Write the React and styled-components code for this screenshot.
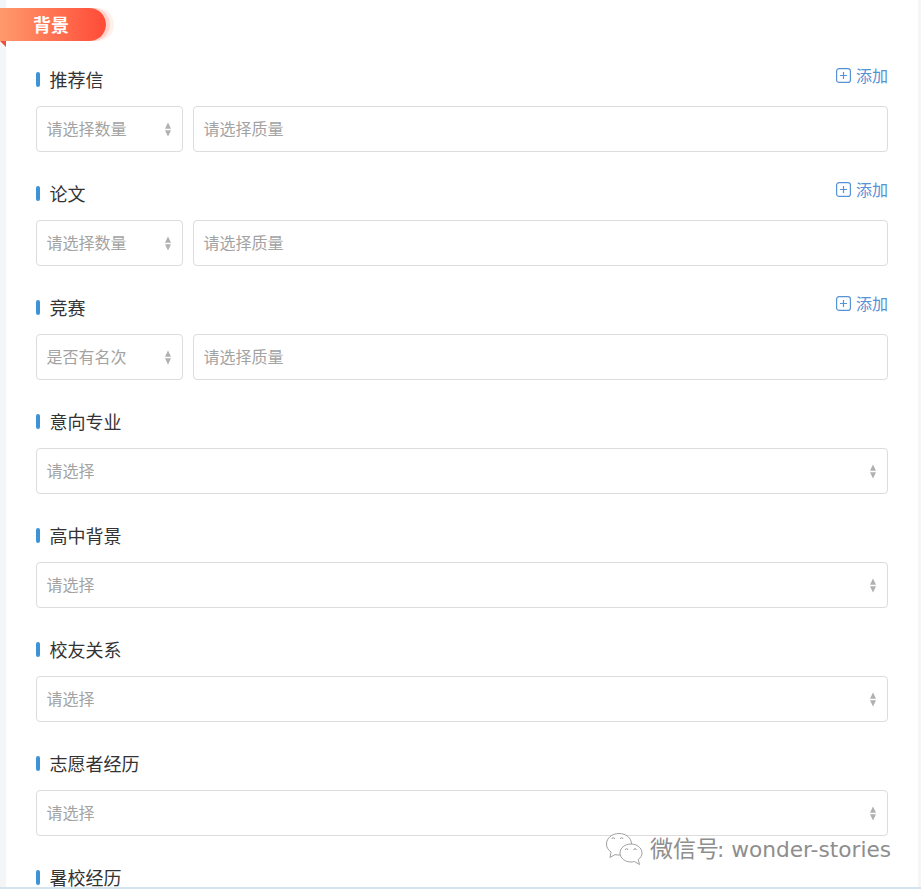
import React from "react";
import styled, { createGlobalStyle } from "styled-components";

const Global = createGlobalStyle`
  html, body { margin: 0; padding: 0; height: 100%; overflow: hidden; background: #f4f5f7; }
  #root { height: 100%; }
  * { box-sizing: border-box; }
`;

const Screen = styled.div`
  position: relative;
  height: 889px;
  display: flex;
  flex-direction: column;
  font-family: "Noto Sans CJK SC", "Liberation Sans", sans-serif;
`;

const Viewport = styled.div`
  flex: 1;
  min-height: 0;
  overflow: hidden;
  padding: 0 3px 0 6px;
`;

const Panel = styled.main`
  background: #fff;
  padding: 8px 30px 0;
`;

const Ribbon = styled.div`
  position: relative;
  width: 106px;
  height: 33px;
  margin-left: -36px;
  margin-bottom: 25px;
  padding-left: 33px;
  border-radius: 0 17px 17px 0;
  background: linear-gradient(90deg, #ff9a6c 0%, #ff4b38 100%);
  box-shadow: 4px 0 0 #ffd4cc, 8px 0 0 #fff0ec;
  color: #fff;
  font-size: 18px;
  font-weight: 700;
  line-height: 33px;
  &::after {
    content: "";
    position: absolute;
    left: 0;
    top: 33px;
    border-top: 6px solid #f04e3c;
    border-left: 6px solid transparent;
  }
`;

const Section = styled.section`
  margin-bottom: 28px;
`;

const SectionHead = styled.div`
  display: flex;
  justify-content: space-between;
  height: 28px;
  margin-bottom: 12px;
`;

const Title = styled.h3`
  position: relative;
  margin: 0;
  padding-left: 13.5px;
  color: #333;
  font-size: 18px;
  font-weight: 400;
  line-height: 26px;
  &::before {
    content: "";
    position: absolute;
    left: 0;
    top: 6px;
    width: 4px;
    height: 15px;
    border-radius: 2px;
    background: #3d93d6;
  }
`;

const AddLink = styled.a`
  display: flex;
  align-items: center;
  gap: 5px;
  height: 18px;
  color: #5592d6;
  font-size: 16px;
  line-height: 18px;
`;

const Fields = styled.div`
  display: flex;
  gap: 10px;
`;

const Field = styled.div`
  display: flex;
  align-items: center;
  justify-content: space-between;
  flex: ${(p) => (p.$narrow ? "0 0 147px" : "1")};
  height: 46px;
  padding: 0 10px 2px 9.5px;
  border: 1px solid #dcdcdc;
  border-radius: 4px;
  background: #fff;
  color: #a3a3a3;
  font-size: 16px;
`;

const SortGlyph = styled.svg`
  width: 8px;
  height: 15px;
  margin-top: 2px;
  fill: #b0b0b0;
`;

const Watermark = styled.div`
  position: absolute;
  left: 604px;
  top: 829px;
  display: flex;
  align-items: center;
  gap: 6px;
  color: #8e8e8e;
  line-height: 36px;
  white-space: nowrap;
  text-shadow: 0 0 2px #fff;
`;

const WatermarkLabel = styled.span`
  font-size: 23px;
`;

const WatermarkId = styled.span`
  margin-left: -2px;
  font-family: "DejaVu Sans", "Liberation Sans", sans-serif;
  font-size: 21.7px;
`;

const BottomEdge = styled.div`
  flex: 0 0 2px;
  background: #d4e4ee;
`;

const PlusIcon = () => (
  <svg width="15" height="15" viewBox="0 0 15 15" fill="none" stroke="#5592d6" strokeWidth="1.2">
    <rect x="0.6" y="0.6" width="13.8" height="13.8" rx="2.5" />
    <path d="M7.5 4v7M4 7.5h7" />
  </svg>
);

const SortIcon = () => (
  <SortGlyph viewBox="0 0 8 15">
    <path d="M4 0.5 7 6.8H1Z" />
    <path d="M4 14.5 7 8.2H1Z" />
  </SortGlyph>
);

const WeChatIcon = () => (
  <svg width="40" height="34" viewBox="0 0 40 34" fill="#fff" stroke="#a0a0a0" strokeWidth="1">
    <path d="M15 1.5C8.100 1.5 2.500 6.200 2.500 12c0 3.300 1.800 6.200 4.600 8.100L6 25.500l5-2.900c1.300.3 2.600.4 4 .4 6.900 0 12.500-4.900 12.500-11S21.900 1.500 15 1.500Z" />
    <path d="M27 12c-6.100 0-11 4-11 9s4.900 9 11 9c1.200 0 2.300-.2 3.400-.5l5.100 3-1.300-5c2.400-1.600 3.800-4 3.800-6.500 0-5-4.900-9-11-9Z" />
    <path d="M8 7a1.300 1.300 0 0 1 2.600 0M16.400 7a1.300 1.300 0 0 1 2.600 0M21.400 18a1.300 1.300 0 0 1 2.600 0M29.700 18a1.300 1.300 0 0 1 2.600 0" fill="none" />
  </svg>
);

const pairs = [
  { title: "推荐信", first: "请选择数量" },
  { title: "论文", first: "请选择数量" },
  { title: "竞赛", first: "是否有名次" },
];
const singles = ["意向专业", "高中背景", "校友关系", "志愿者经历"];

export default function App() {
  return (
    <Screen>
      <Global />
      <Viewport>
        <Panel>
          <Ribbon>背景</Ribbon>
          {pairs.map((s) => (
            <Section key={s.title}>
              <SectionHead>
                <Title>{s.title}</Title>
                <AddLink>
                  <PlusIcon />
                  添加
                </AddLink>
              </SectionHead>
              <Fields>
                <Field $narrow>
                  {s.first}
                  <SortIcon />
                </Field>
                <Field>请选择质量</Field>
              </Fields>
            </Section>
          ))}
          {singles.map((t) => (
            <Section key={t}>
              <SectionHead>
                <Title>{t}</Title>
              </SectionHead>
              <Fields>
                <Field>
                  请选择
                  <SortIcon />
                </Field>
              </Fields>
            </Section>
          ))}
          <SectionHead>
            <Title>暑校经历</Title>
          </SectionHead>
        </Panel>
      </Viewport>
      <BottomEdge />
      <Watermark>
        <WeChatIcon />
        <div>
          <WatermarkLabel>微信号</WatermarkLabel>
          <WatermarkId>: wonder-stories</WatermarkId>
        </div>
      </Watermark>
    </Screen>
  );
}
